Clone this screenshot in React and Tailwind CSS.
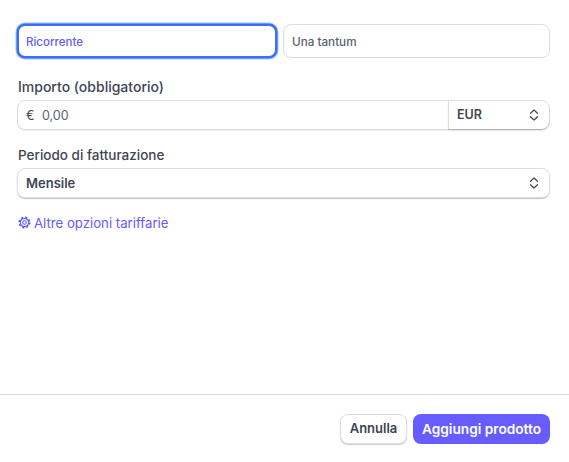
const Chevrons = () => (
  <svg width="12" height="12" viewBox="0 0 12 12" fill="none" stroke="#414552" strokeWidth="1.2" strokeLinecap="round" strokeLinejoin="round">
    <path d="M2.5 4.3 6 1l3.5 3.3" />
    <path d="M2.5 7.7 6 11l3.5-3.3" />
  </svg>
);

const Gear = () => (
  <svg width="13" height="13" viewBox="0 0 13 13" fill="none" stroke="#635BFF">
    <circle cx="6.5" cy="6.5" r="4.2" strokeWidth="1.2" />
    <circle cx="6.5" cy="6.5" r="5.3" strokeWidth="1.4" strokeDasharray="2.1 2.06" />
    <circle cx="6.5" cy="6.5" r="1.8" strokeWidth="1.1" />
  </svg>
);

export default function App() {
  return (
    <div className="w-[569px] h-[462px] bg-white flex flex-col text-[#414552] font-['Inter',sans-serif] overflow-hidden">
      <div className="flex-1 px-[17px] pt-[24px]">
        <div className="flex gap-[6px]">
          <button className="w-[260px] h-[34px] rounded-[8px] bg-white border-2 border-[#3B6FF5] shadow-[0_0_0_0.5px_#3B6FF5,0_0_0_1.5px_#9CC4FB] text-left pl-[7px] pt-[3px] text-[11.5px] font-medium text-[#635BFF]">Ricorrente</button>
          <button className="w-[267px] h-[34px] rounded-[8px] bg-white border border-[#D8DEE4] text-left pl-[8px] pt-[3px] text-[11.7px] font-medium text-[#596171]">Una tantum</button>
        </div>
        <label className="block mt-[20px] ml-[1px] h-[18px] leading-[18px] text-[14px] font-medium">Importo (obbligatorio)</label>
        <div className="mt-[4px] flex h-[30px] w-[533px] rounded-[8px] border border-[#D8DEE4] shadow-[0_1px_1px_rgba(0,0,0,0.08)]">
          <div className="flex-1 flex items-center pl-[8px] pt-[2px] text-[12.5px]">
            <span className="w-[16px]">€</span>
            <span className="text-[#596171]">0,00</span>
          </div>
          <div className="w-[101px] flex items-center justify-between pl-[8px] pr-[9px] border-l border-[#D8DEE4] text-[12.5px] font-semibold shadow-[0_1px_1px_rgba(0,0,0,0.2)] rounded-r-[8px]">
            <span className="pt-[1px]">EUR</span>
            <Chevrons />
          </div>
        </div>
        <label className="block mt-[16px] ml-[1px] h-[18px] leading-[18px] text-[13.5px] font-medium">Periodo di fatturazione</label>
        <div className="mt-[4px] flex items-center justify-between h-[30px] w-[533px] rounded-[8px] border border-[#D8DEE4] shadow-[0_1px_1px_rgba(0,0,0,0.25)] pl-[8px] pr-[9px] text-[13px] font-semibold">
          <span className="pt-[1px]">Mensile</span>
          <Chevrons />
        </div>
        <a className="mt-[17px] flex items-center gap-[3px] text-[13.2px] leading-[16px] text-[#635BFF]">
          <span className="-mt-[1px] ml-[1px]"><Gear /></span>
          Altre opzioni tariffarie
        </a>
      </div>
      <div className="h-[68px] border-t border-[#D8DEE4] flex justify-end items-start gap-[6px] pt-[19px] pr-[19px]">
        <button className="w-[67px] h-[30px] rounded-[8px] bg-white border border-[#D8DEE4] shadow-[0_1px_1px_rgba(0,0,0,0.2)] text-[13px] font-semibold">Annulla</button>
        <button className="w-[137px] h-[30px] rounded-[8px] bg-[#675DFF] text-white text-[13.7px] font-semibold">Aggiungi prodotto</button>
      </div>
    </div>
  );
}
